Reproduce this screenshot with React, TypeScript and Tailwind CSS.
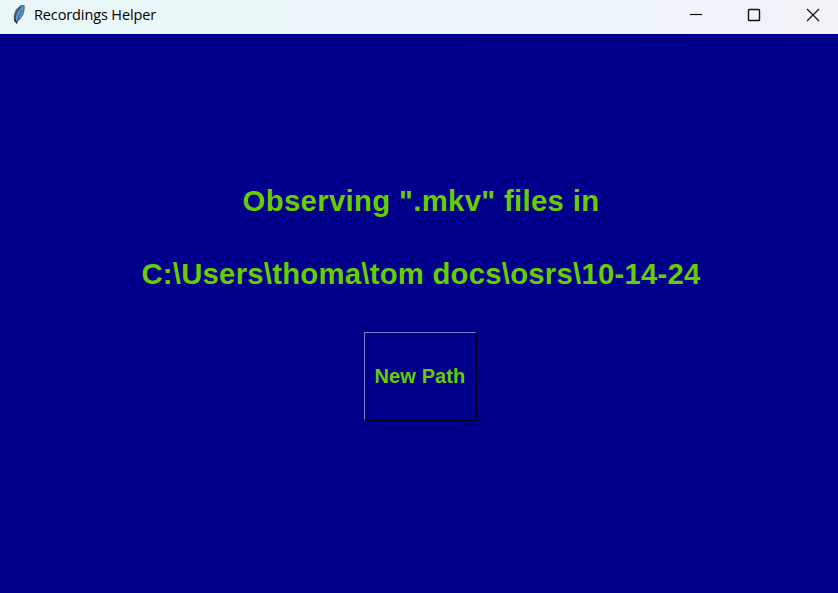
export default function App() {
  return (
    <div className="flex h-[593px] w-[838px] flex-col overflow-hidden bg-[#00008b]">
      <header className="flex h-[34px] shrink-0 items-start justify-between bg-linear-to-r from-[#e9f7f7] via-[#edf3fb] via-75% to-[#f1f2f7]">
        <div className="flex h-[30px] items-center pl-3">
          <svg width="14" height="20" viewBox="0 0 14 20" fill="none">
            <path d="M11.800 0C8 .4 4.300 3.400 3 8C2 11 2 14 3 16.500C5 17.500 8.500 14 10.500 10C12 6.500 12.500 3 11.800 0Z" fill="#5b9bd8" stroke="#4b5158" strokeWidth="1" />
            <path d="M9.500 1.500C5 5 3 10 3 15" stroke="#454545" strokeWidth="1.2" />
            <path d="M9.800 4.500C8 8.500 6 13 4.800 18" stroke="#24517f" strokeWidth="0.8" />
            <path d="M2.500 14.500L5 18.500" stroke="#202020" strokeWidth="1.4" />
          </svg>
          <span className="ml-2 font-['Open_Sans',sans-serif] text-[14.5px] leading-5 tracking-[-0.12px] text-black">Recordings Helper</span>
        </div>
        <div className="flex h-[30px] items-center">
          <svg width="148" height="30" viewBox="690 0 148 30" fill="none" stroke="#111" strokeWidth="1.2">
            <path d="M690 14.500H702" />
            <rect x="748.500" y="9.500" width="11" height="11" rx="0.800" strokeWidth="1.4" />
            <path d="M807 9L819 21M819 9L807 21" />
          </svg>
        </div>
      </header>
      <main className="flex flex-1 flex-col items-center pl-[4px] pt-[149px] font-['Liberation_Sans',Arial,sans-serif] font-bold text-[#66cd00]">
        <p className="whitespace-pre text-[29.3px] leading-9 tracking-[0.33px]">Observing ".mkv" files in</p>
        <p className="mt-[37px] whitespace-pre text-[29.3px] leading-9 tracking-[0.24px]">C:\Users\thoma\tom docs\osrs\10-14-24</p>
        <button className="mr-px mt-[40px] flex h-[89px] w-[113px] items-center justify-center border-t border-r-2 border-b-2 border-l border-t-[#8080c5] border-r-[#000020] border-b-[#000020] border-l-[#8080c5] pb-px text-[20px] tracking-[0.1px]">New Path</button>
      </main>
    </div>
  );
}
